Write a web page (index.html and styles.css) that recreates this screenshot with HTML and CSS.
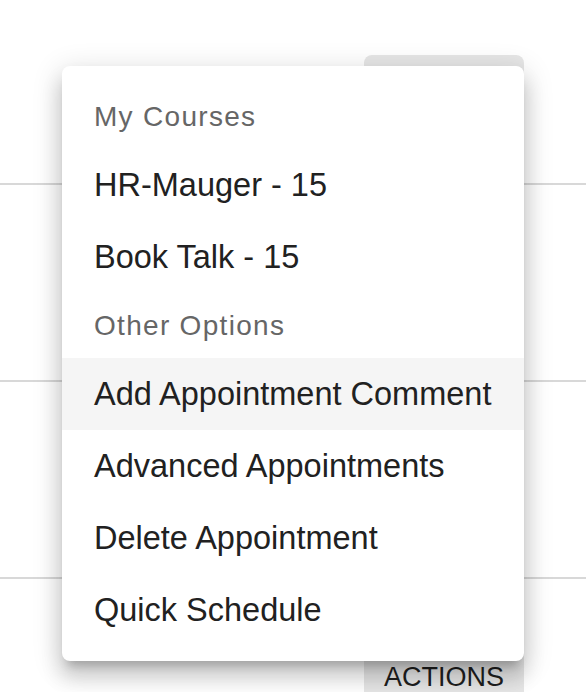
FILE: index.html
```html
<!DOCTYPE html>
<html lang="en">
<head>
<meta charset="utf-8">
<title>Menu</title>
<link rel="stylesheet" href="styles.css">
</head>
<body>
<div class="page">
  <div class="row row-first"></div>
  <div class="row"></div>
  <div class="row"></div>
  <div class="row row-last"></div>

  <div class="actions-btn"><span class="actions-label">ACTIONS</span></div>

  <div class="menu" role="menu">
    <div class="menu-header">My Courses</div>
    <div class="menu-item">HR-Mauger - 15</div>
    <div class="menu-item">Book Talk - 15</div>
    <div class="menu-header">Other Options</div>
    <div class="menu-item menu-item-hover">Add Appointment Comment</div>
    <div class="menu-item">Advanced Appointments</div>
    <div class="menu-item">Delete Appointment</div>
    <div class="menu-item">Quick Schedule</div>
  </div>
</div>
</body>
</html>
```

FILE: styles.css
```css
html, body {
  margin: 0;
  padding: 0;
  background: #ffffff;
  font-family: "Liberation Sans", Arial, Helvetica, sans-serif;
}

.page {
  position: relative;
  width: 586px;
  height: 692px;
  overflow: hidden;
}

.row {
  height: 195px;
  border-bottom: 2px solid #d8d8d8;
}

.row-first {
  height: 183px;
}

.row-last {
  border-bottom: none;
}

.actions-btn {
  position: absolute;
  left: 364px;
  top: 55px;
  width: 160px;
  height: 660px;
  background: #e6e6e6;
  border-radius: 8px;
  box-sizing: border-box;
}

.actions-label {
  position: absolute;
  left: 0;
  right: 0;
  top: 606px;
  text-align: center;
  font-size: 27px;
  line-height: 32px;
  color: #1f1f1f;
}

.menu {
  position: absolute;
  left: 62px;
  top: 66px;
  width: 462px;
  box-sizing: border-box;
  padding: 18px 0 15px;
  background: #ffffff;
  border-radius: 8px;
  box-shadow:
    0 10px 10px -6px rgba(0, 0, 0, 0.2),
    0 16px 20px 2px rgba(0, 0, 0, 0.14),
    0 6px 28px 4px rgba(0, 0, 0, 0.12);
  display: flex;
  flex-direction: column;
}

.menu-header {
  height: 65px;
  display: flex;
  align-items: center;
  padding-left: 32px;
  font-size: 28px;
  letter-spacing: 1.3px;
  color: #666666;
}

.menu-item {
  height: 72px;
  display: flex;
  align-items: center;
  padding-left: 32px;
  font-size: 32.5px;
  color: #212121;
}

.menu-item-hover {
  background: #f5f5f5;
}
```
